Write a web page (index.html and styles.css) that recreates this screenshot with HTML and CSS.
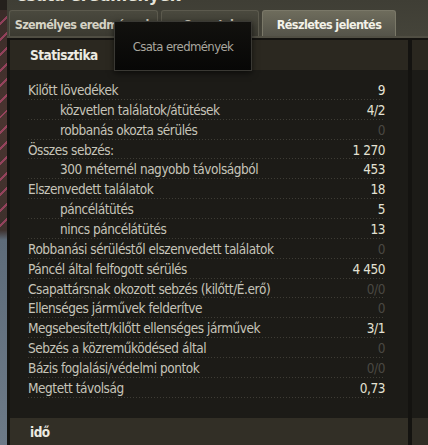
FILE: index.html
```html
<!DOCTYPE html>
<html lang="hu">
    <head>
        <title>Csata eredmények</title>
        <meta charset="UTF-8">
        <meta name="viewport" content="width=device-width, initial-scale=1">
        <link rel="stylesheet" href="styles.css">
    </head>
    <body>
        <div class="screen">
            <div class="backdrop"></div>

            <div class="window">
                <h1 class="title">Csata eredmények</h1>

                <nav class="tabs">
                    <button class="tab tab-personal">Személyes eredmények</button>
                    <button class="tab tab-team">Csapatok</button>
                    <button class="tab tab-report active">Részletes jelentés</button>
                </nav>

                <div class="body">
                    <section class="panel">
                        <h2 class="panel-head">Statisztika</h2>

                        <ul class="stats">
                            <li class="row"><span>Kilőtt lövedékek</span><b>9</b></li>
                            <li class="row sub"><span>közvetlen találatok/átütések</span><b>4/2</b></li>
                            <li class="row sub"><span>robbanás okozta sérülés</span><b class="dim">0</b></li>
                            <li class="row"><span>Összes sebzés:</span><b>1 270</b></li>
                            <li class="row sub"><span>300 méternél nagyobb távolságból</span><b>453</b></li>
                            <li class="row"><span>Elszenvedett találatok</span><b>18</b></li>
                            <li class="row sub"><span>páncélátütés</span><b>5</b></li>
                            <li class="row sub"><span>nincs páncélátütés</span><b>13</b></li>
                            <li class="row"><span>Robbanási sérüléstől elszenvedett találatok</span><b class="dim">0</b></li>
                            <li class="row"><span>Páncél által felfogott sérülés</span><b>4 450</b></li>
                            <li class="row"><span>Csapattársnak okozott sebzés (kilőtt/É.erő)</span><b class="dim">0/0</b></li>
                            <li class="row"><span>Ellenséges járművek felderítve</span><b class="dim">0</b></li>
                            <li class="row"><span>Megsebesített/kilőtt ellenséges járművek</span><b>3/1</b></li>
                            <li class="row"><span>Sebzés a közreműködésed által</span><b class="dim">0</b></li>
                            <li class="row"><span>Bázis foglalási/védelmi pontok</span><b class="dim">0/0</b></li>
                            <li class="row"><span>Megtett távolság</span><b>0,73</b></li>
                        </ul>

                        <h2 class="panel-head">idő</h2>
                    </section>

                    <aside class="side">
                        <div class="side-head"></div>
                        <div class="side-body"></div>
                        <div class="side-foot"></div>
                    </aside>
                </div>
            </div>

            <div class="tooltip">Csata eredmények</div>
        </div>
    </body>
</html>
```

FILE: styles.css
```css
html, body {
    margin: 0;
    padding: 0;
    background-color: #1b1a16;
}

body {
    font-family: 'DejaVu Sans Condensed', 'DejaVu Sans', sans-serif;
    font-size: 13.5px;
    letter-spacing: -0.45px;
    color: #c6c4b9;
}

.screen {
    position: relative;
    display: flex;
    width: 428px;
    height: 445px;
    overflow: hidden;
}

/* game scene peeking on the left */
.backdrop {
    width: 7px;
    flex: none;
    background:
        repeating-linear-gradient(135deg, transparent 0 9px, rgba(214, 80, 130, 0.55) 9px 11px) 0 10px / 7px 220px no-repeat,
        linear-gradient(to bottom, #24201c 0, #24201c 10px, #3a2c29 10px, #4a3430 120px, #3d302c 230px, #5d6b79 240px, #6d7a88 445px);
}

.window {
    flex: 1;
    display: flex;
    flex-direction: column;
    background: linear-gradient(to bottom, #3f3e35 0, #45443a 38px, #141310 38px);
}

.title {
    margin: -15px 0 5px;
    padding-left: 8px;
    height: 20px;
    line-height: 20px;
    font-size: 18px;
    font-weight: bold;
    letter-spacing: -0.3px;
    color: #e6e4da;
}

.tabs {
    display: flex;
    gap: 3px;
    padding-left: 2px;
    height: 26px;
    border-bottom: 2px solid #504e43;
}

.tab {
    font-family: inherit;
    font-size: 12.5px;
    letter-spacing: -0.6px;
    font-weight: bold;
    color: #d6d3c5;
    background: linear-gradient(to bottom, #4a493e, #3b3a31);
    border: 1px solid #5c5a4e;
    border-bottom: none;
    border-radius: 3px 3px 0 0;
    padding: 1px 0 0;
    text-align: center;
    white-space: nowrap;
}

.tab-personal { width: 149px; }
.tab-team { width: 98px; }
.tab-report { width: 134px; }

.tab.active {
    background: linear-gradient(to bottom, #6e6c5c, #55544a);
    border-color: #7a7868;
    color: #f3f1e8;
}

.body {
    flex: 1;
    display: flex;
    gap: 4px;
    padding: 2px 0 0 3px;
    background-color: #141310;
}

.panel {
    width: 398px;
    display: flex;
    flex-direction: column;
    background-color: #1c1b17;
}

.panel-head {
    margin: 0;
    height: 30px;
    line-height: 30px;
    padding-left: 20px;
    font-size: 13.5px;
    letter-spacing: -0.5px;
    font-weight: bold;
    color: #ecebe2;
    background-color: #2b2820;
}

.panel-head:last-child {
    margin-top: auto;
    height: 27px;
    line-height: 29px;
    background-color: #322f26;
}

.stats {
    list-style: none;
    margin: 10px 23px 0 18px;
    padding: 0;
}

.row {
    display: flex;
    justify-content: space-between;
    align-items: center;
    height: 19.87px;
    background: linear-gradient(to right, #3e3c35 1px, transparent 1px) left bottom / 3px 1px repeat-x;
}

.row.sub {
    padding-left: 32px;
}

.row b {
    font-weight: normal;
    color: #e4e2d4;
}

.row b.dim {
    color: #4a4842;
}

.side {
    flex: 1;
    display: flex;
    flex-direction: column;
    background-color: #1c1b17;
}

.side-head {
    height: 30px;
    background-color: #2a271f;
}

.side-body {
    flex: 1;
}

.side-foot {
    height: 27px;
    background-color: #302d25;
}

.tooltip {
    position: absolute;
    left: 114px;
    top: 21px;
    width: 136px;
    height: 48px;
    line-height: 50px;
    text-align: center;
    font-size: 13px;
    letter-spacing: -0.6px;
    color: #a9a79f;
    background: linear-gradient(to bottom, #12110e, #070706);
    border: 1px solid #3a3934;
    box-shadow: 0 2px 6px rgba(0, 0, 0, 0.6);
}
```
